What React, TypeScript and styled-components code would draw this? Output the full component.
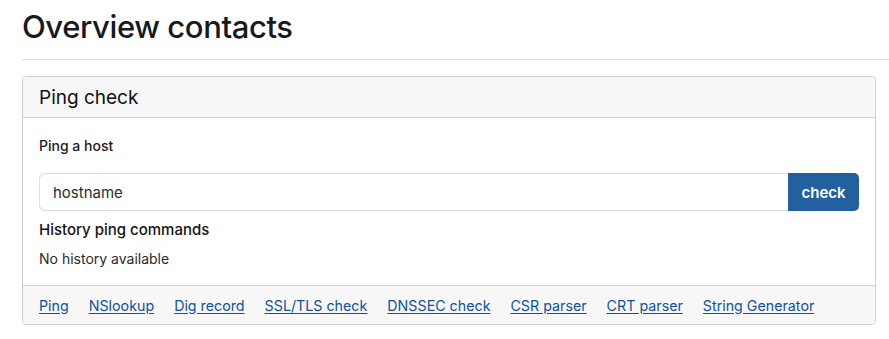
import React from 'react';
import styled, { createGlobalStyle } from 'styled-components';

const GlobalStyle = createGlobalStyle`
  html, body {
    margin: 0;
    padding: 0;
    background: #fff;
  }
  body {
    font-family: Inter, "Noto Sans", "Liberation Sans", sans-serif;
    color: #151515;
  }
`;

const Page = styled.div`
  padding: 0 0 0 22px;
`;

const Title = styled.h1`
  margin: 0;
  padding: 8px 0 13px;
  font-size: 31px;
  font-weight: 500;
  line-height: 38px;
  letter-spacing: -0.4px;
  color: #16191d;
  border-bottom: 1px solid #dedede;
`;

const Card = styled.section`
  margin: 16px 13px 0 0;
  border: 1px solid #cfcfcf;
  border-radius: 4px;
  overflow: hidden;
`;

const CardHeader = styled.div`
  background: #f7f7f7;
  border-bottom: 1px solid #cfcfcf;
  padding: 0 16px;
  height: 40px;
  display: flex;
  align-items: center;
  font-size: 19px;
  font-weight: 400;
  color: #111;
`;

const CardBody = styled.div`
  padding: 18px 16px 16px;
  display: flex;
  flex-direction: column;
`;

const Label = styled.div`
  font-size: 14px;
  font-weight: 500;
  line-height: 20px;
  color: #1a1a1a;
`;

const InputRow = styled.div`
  display: flex;
  margin: 17px 0 0;
  height: 38px;
`;

const Input = styled.input`
  flex: 1;
  border: 1px solid #dcdde0;
  border-right: none;
  border-radius: 6px 0 0 6px;
  padding: 0 13px;
  font-family: inherit;
  font-size: 15px;
  color: #222;
  outline: none;
  &::placeholder {
    color: #2b2b2b;
  }
`;

const CheckButton = styled.button`
  width: 71px;
  border: none;
  border-radius: 0 5px 5px 0;
  background: #2360a0;
  color: #fff;
  font-family: inherit;
  font-size: 15px;
  font-weight: 600;
  cursor: pointer;
`;

const SubTitle = styled.div`
  margin-top: 9px;
  font-size: 15px;
  font-weight: 500;
  line-height: 20px;
  color: #141414;
`;

const Muted = styled.div`
  margin-top: 9px;
  font-size: 14px;
  line-height: 20px;
  color: #2a2a2a;
`;

const CardFooter = styled.nav`
  background: #f7f7f7;
  border-top: 1px solid #cfcfcf;
  height: 38px;
  padding: 0 16px;
  display: flex;
  align-items: center;
  gap: 20px;
`;

const FooterLink = styled.a`
  font-size: 14.25px;
  color: #0d52a1;
  text-decoration: underline;
  text-underline-offset: 2px;
`;

const links = [
  'Ping',
  'NSlookup',
  'Dig record',
  'SSL/TLS check',
  'DNSSEC check',
  'CSR parser',
  'CRT parser',
  'String Generator',
];

export default function App() {
  return (
    <Page>
      <GlobalStyle />
      <Title>Overview contacts</Title>
      <Card>
        <CardHeader>Ping check</CardHeader>
        <CardBody>
          <Label>Ping a host</Label>
          <InputRow>
            <Input placeholder="hostname" />
            <CheckButton>check</CheckButton>
          </InputRow>
          <SubTitle>History ping commands</SubTitle>
          <Muted>No history available</Muted>
        </CardBody>
        <CardFooter>
          {links.map((l) => (
            <FooterLink key={l} href="#">
              {l}
            </FooterLink>
          ))}
        </CardFooter>
      </Card>
    </Page>
  );
}
